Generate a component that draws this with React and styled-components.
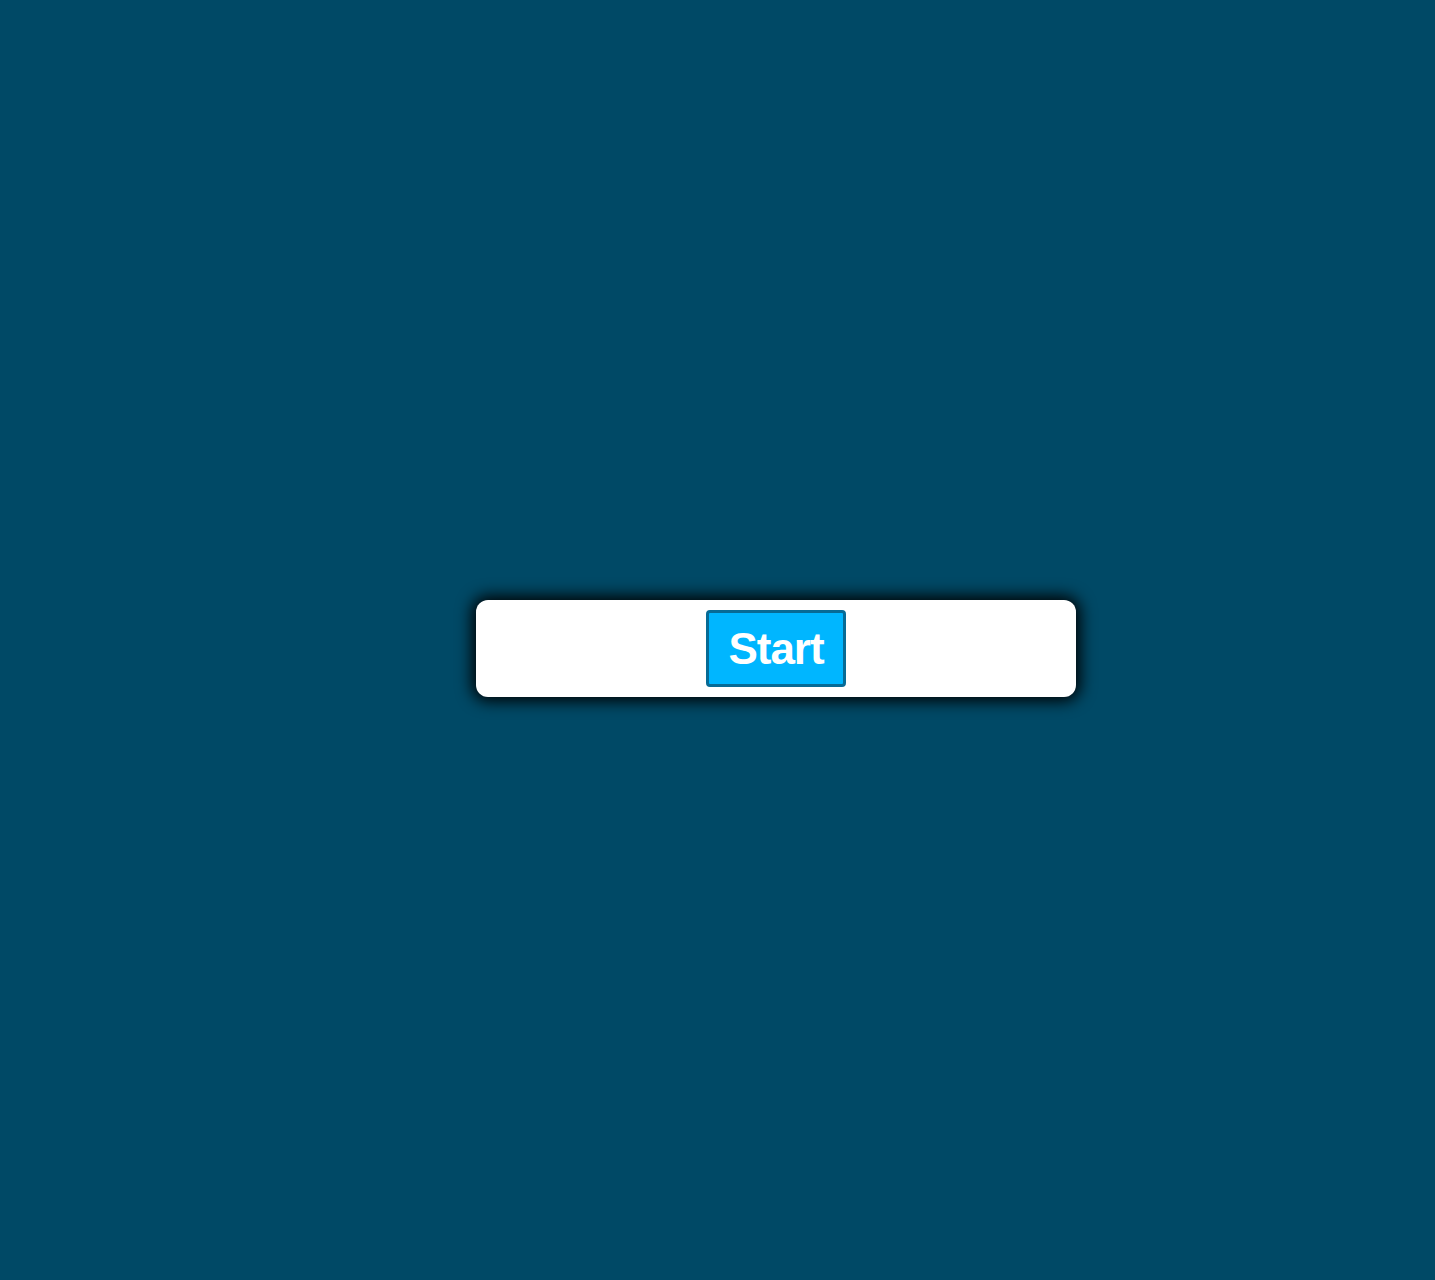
import React from "react"
import styled, { createGlobalStyle } from "styled-components"

const GlobalStyle = createGlobalStyle`
    html {
        overflow: scroll;
    }
    body {
        margin: 8px;
        background-color: #004966;
        font-family: "Liberation Sans", Arial, sans-serif;
    }
    ::-webkit-scrollbar {
        width: 15px;
        height: 15px;
        background-color: #f1f1f1;
    }
    ::-webkit-scrollbar-thumb {
        background-color: #c1c1c1;
    }
    ::-webkit-scrollbar-button:single-button {
        display: block;
        width: 15px;
        height: 15px;
        background-color: #f1f1f1;
    }
    ::-webkit-scrollbar-corner {
        background-color: #dcdcdc;
    }
`

const Stage = styled.div`
    width: 100vw;
    height: 100vh;
    box-sizing: border-box;
    padding-left: 101px;
    display: flex;
    align-items: center;
    justify-content: center;
`

const Panel = styled.div`
    width: 600px;
    box-sizing: border-box;
    padding: 10px 0;
    background-color: #FFF;
    border-radius: 12px;
    box-shadow: 0 0 16px 4px #000;
    display: flex;
    justify-content: center;
`

const StartButton = styled.button`
    font-family: "Liberation Sans", Arial, sans-serif;
    font-size: 44px;
    font-weight: bold;
    line-height: 51px;
    letter-spacing: -1px;
    color: #FFF;
    background-color: #00b6ff;
    border: 3px solid #076b96;
    border-radius: 4px;
    padding: 10px 19px;
    cursor: pointer;
`

export default function App() {
    return (
        <>
            <GlobalStyle />
            <Stage>
                <Panel>
                    <StartButton>Start</StartButton>
                </Panel>
            </Stage>
        </>
    )
}
